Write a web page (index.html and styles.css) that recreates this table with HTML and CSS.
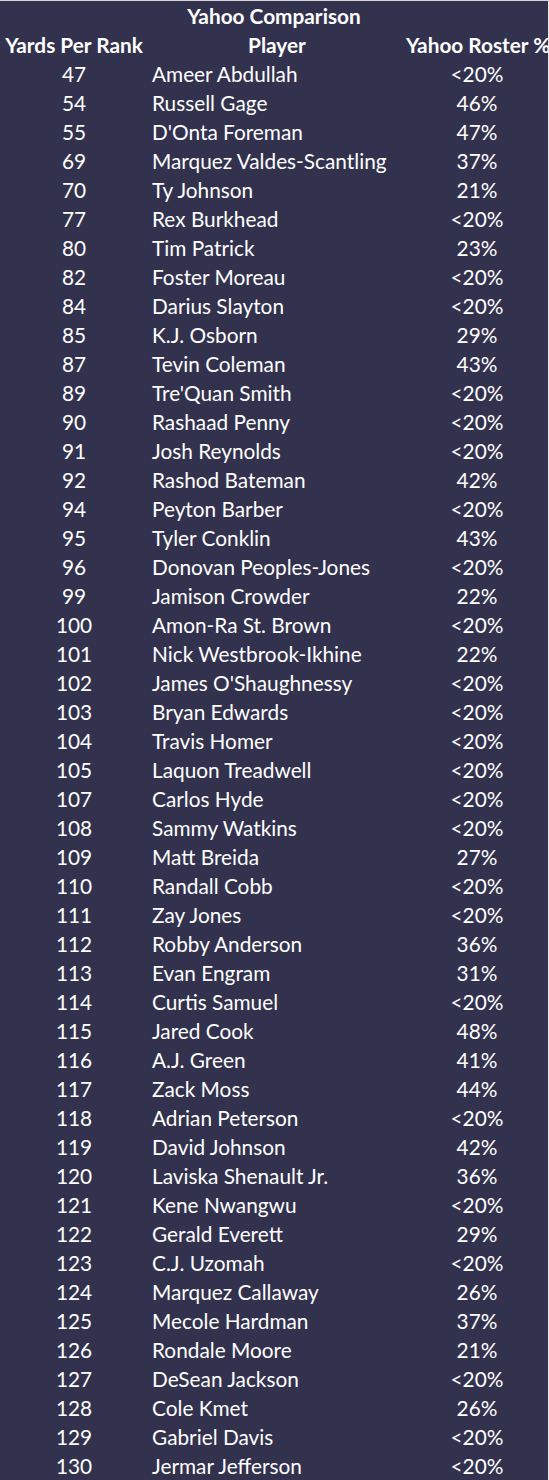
FILE: index.html
```html
<!DOCTYPE html>
<html>
<head>
<meta charset="utf-8">
<link rel="stylesheet" href="styles.css">
</head>
<body>
<div class="sheet">
  <div class="title">Yahoo Comparison</div>
  <div class="table" id="t">
    <div class="hd c1">Yards Per Rank</div><div class="hd c2">Player</div><div class="hd c3">Yahoo Roster %</div>
    <div class="c1">47</div><div class="c2 name">Ameer Abdullah</div><div class="c3">&lt;20%</div>
    <div class="c1">54</div><div class="c2 name">Russell Gage</div><div class="c3">46%</div>
    <div class="c1">55</div><div class="c2 name">D'Onta Foreman</div><div class="c3">47%</div>
    <div class="c1">69</div><div class="c2 name">Marquez Valdes-Scantling</div><div class="c3">37%</div>
    <div class="c1">70</div><div class="c2 name">Ty Johnson</div><div class="c3">21%</div>
    <div class="c1">77</div><div class="c2 name">Rex Burkhead</div><div class="c3">&lt;20%</div>
    <div class="c1">80</div><div class="c2 name">Tim Patrick</div><div class="c3">23%</div>
    <div class="c1">82</div><div class="c2 name">Foster Moreau</div><div class="c3">&lt;20%</div>
    <div class="c1">84</div><div class="c2 name">Darius Slayton</div><div class="c3">&lt;20%</div>
    <div class="c1">85</div><div class="c2 name">K.J. Osborn</div><div class="c3">29%</div>
    <div class="c1">87</div><div class="c2 name">Tevin Coleman</div><div class="c3">43%</div>
    <div class="c1">89</div><div class="c2 name">Tre'Quan Smith</div><div class="c3">&lt;20%</div>
    <div class="c1">90</div><div class="c2 name">Rashaad Penny</div><div class="c3">&lt;20%</div>
    <div class="c1">91</div><div class="c2 name">Josh Reynolds</div><div class="c3">&lt;20%</div>
    <div class="c1">92</div><div class="c2 name">Rashod Bateman</div><div class="c3">42%</div>
    <div class="c1">94</div><div class="c2 name">Peyton Barber</div><div class="c3">&lt;20%</div>
    <div class="c1">95</div><div class="c2 name">Tyler Conklin</div><div class="c3">43%</div>
    <div class="c1">96</div><div class="c2 name">Donovan Peoples-Jones</div><div class="c3">&lt;20%</div>
    <div class="c1">99</div><div class="c2 name">Jamison Crowder</div><div class="c3">22%</div>
    <div class="c1">100</div><div class="c2 name">Amon-Ra St. Brown</div><div class="c3">&lt;20%</div>
    <div class="c1">101</div><div class="c2 name">Nick Westbrook-Ikhine</div><div class="c3">22%</div>
    <div class="c1">102</div><div class="c2 name">James O'Shaughnessy</div><div class="c3">&lt;20%</div>
    <div class="c1">103</div><div class="c2 name">Bryan Edwards</div><div class="c3">&lt;20%</div>
    <div class="c1">104</div><div class="c2 name">Travis Homer</div><div class="c3">&lt;20%</div>
    <div class="c1">105</div><div class="c2 name">Laquon Treadwell</div><div class="c3">&lt;20%</div>
    <div class="c1">107</div><div class="c2 name">Carlos Hyde</div><div class="c3">&lt;20%</div>
    <div class="c1">108</div><div class="c2 name">Sammy Watkins</div><div class="c3">&lt;20%</div>
    <div class="c1">109</div><div class="c2 name">Matt Breida</div><div class="c3">27%</div>
    <div class="c1">110</div><div class="c2 name">Randall Cobb</div><div class="c3">&lt;20%</div>
    <div class="c1">111</div><div class="c2 name">Zay Jones</div><div class="c3">&lt;20%</div>
    <div class="c1">112</div><div class="c2 name">Robby Anderson</div><div class="c3">36%</div>
    <div class="c1">113</div><div class="c2 name">Evan Engram</div><div class="c3">31%</div>
    <div class="c1">114</div><div class="c2 name">Curtis Samuel</div><div class="c3">&lt;20%</div>
    <div class="c1">115</div><div class="c2 name">Jared Cook</div><div class="c3">48%</div>
    <div class="c1">116</div><div class="c2 name">A.J. Green</div><div class="c3">41%</div>
    <div class="c1">117</div><div class="c2 name">Zack Moss</div><div class="c3">44%</div>
    <div class="c1">118</div><div class="c2 name">Adrian Peterson</div><div class="c3">&lt;20%</div>
    <div class="c1">119</div><div class="c2 name">David Johnson</div><div class="c3">42%</div>
    <div class="c1">120</div><div class="c2 name">Laviska Shenault Jr.</div><div class="c3">36%</div>
    <div class="c1">121</div><div class="c2 name">Kene Nwangwu</div><div class="c3">&lt;20%</div>
    <div class="c1">122</div><div class="c2 name">Gerald Everett</div><div class="c3">29%</div>
    <div class="c1">123</div><div class="c2 name">C.J. Uzomah</div><div class="c3">&lt;20%</div>
    <div class="c1">124</div><div class="c2 name">Marquez Callaway</div><div class="c3">26%</div>
    <div class="c1">125</div><div class="c2 name">Mecole Hardman</div><div class="c3">37%</div>
    <div class="c1">126</div><div class="c2 name">Rondale Moore</div><div class="c3">21%</div>
    <div class="c1">127</div><div class="c2 name">DeSean Jackson</div><div class="c3">&lt;20%</div>
    <div class="c1">128</div><div class="c2 name">Cole Kmet</div><div class="c3">26%</div>
    <div class="c1">129</div><div class="c2 name">Gabriel Davis</div><div class="c3">&lt;20%</div>
    <div class="c1">130</div><div class="c2 name">Jermar Jefferson</div><div class="c3">&lt;20%</div>
  </div>
</div>
</body>
</html>
```
FILE: styles.css
```css
html, body {
  margin: 0;
  padding: 0;
  background: #33324e;
}
.sheet {
  width: 548px;
  height: 1479px;
  border-top: 1px solid #d4d4d4;
  border-right: 1px solid #e8e8e8;
  background: #33324e;
  color: #ffffff;
  font-family: Lato, "Open Sans", sans-serif;
  font-size: 20.8px;
  overflow: hidden;
}
.title {
  height: 29px;
  line-height: 29px;
  text-align: center;
  font-weight: bold;
}
.table {
  display: grid;
  grid-template-columns: 148px 258px 142px;
  grid-auto-rows: 29px;
  line-height: 29px;
}
.table > div {
  white-space: nowrap;
}
.c1 { text-align: center; }
.c3 { text-align: center; }
.name { padding-left: 4px; }
.hd { font-weight: bold; text-align: center; }
.hd.c3 { overflow: visible; }
```
